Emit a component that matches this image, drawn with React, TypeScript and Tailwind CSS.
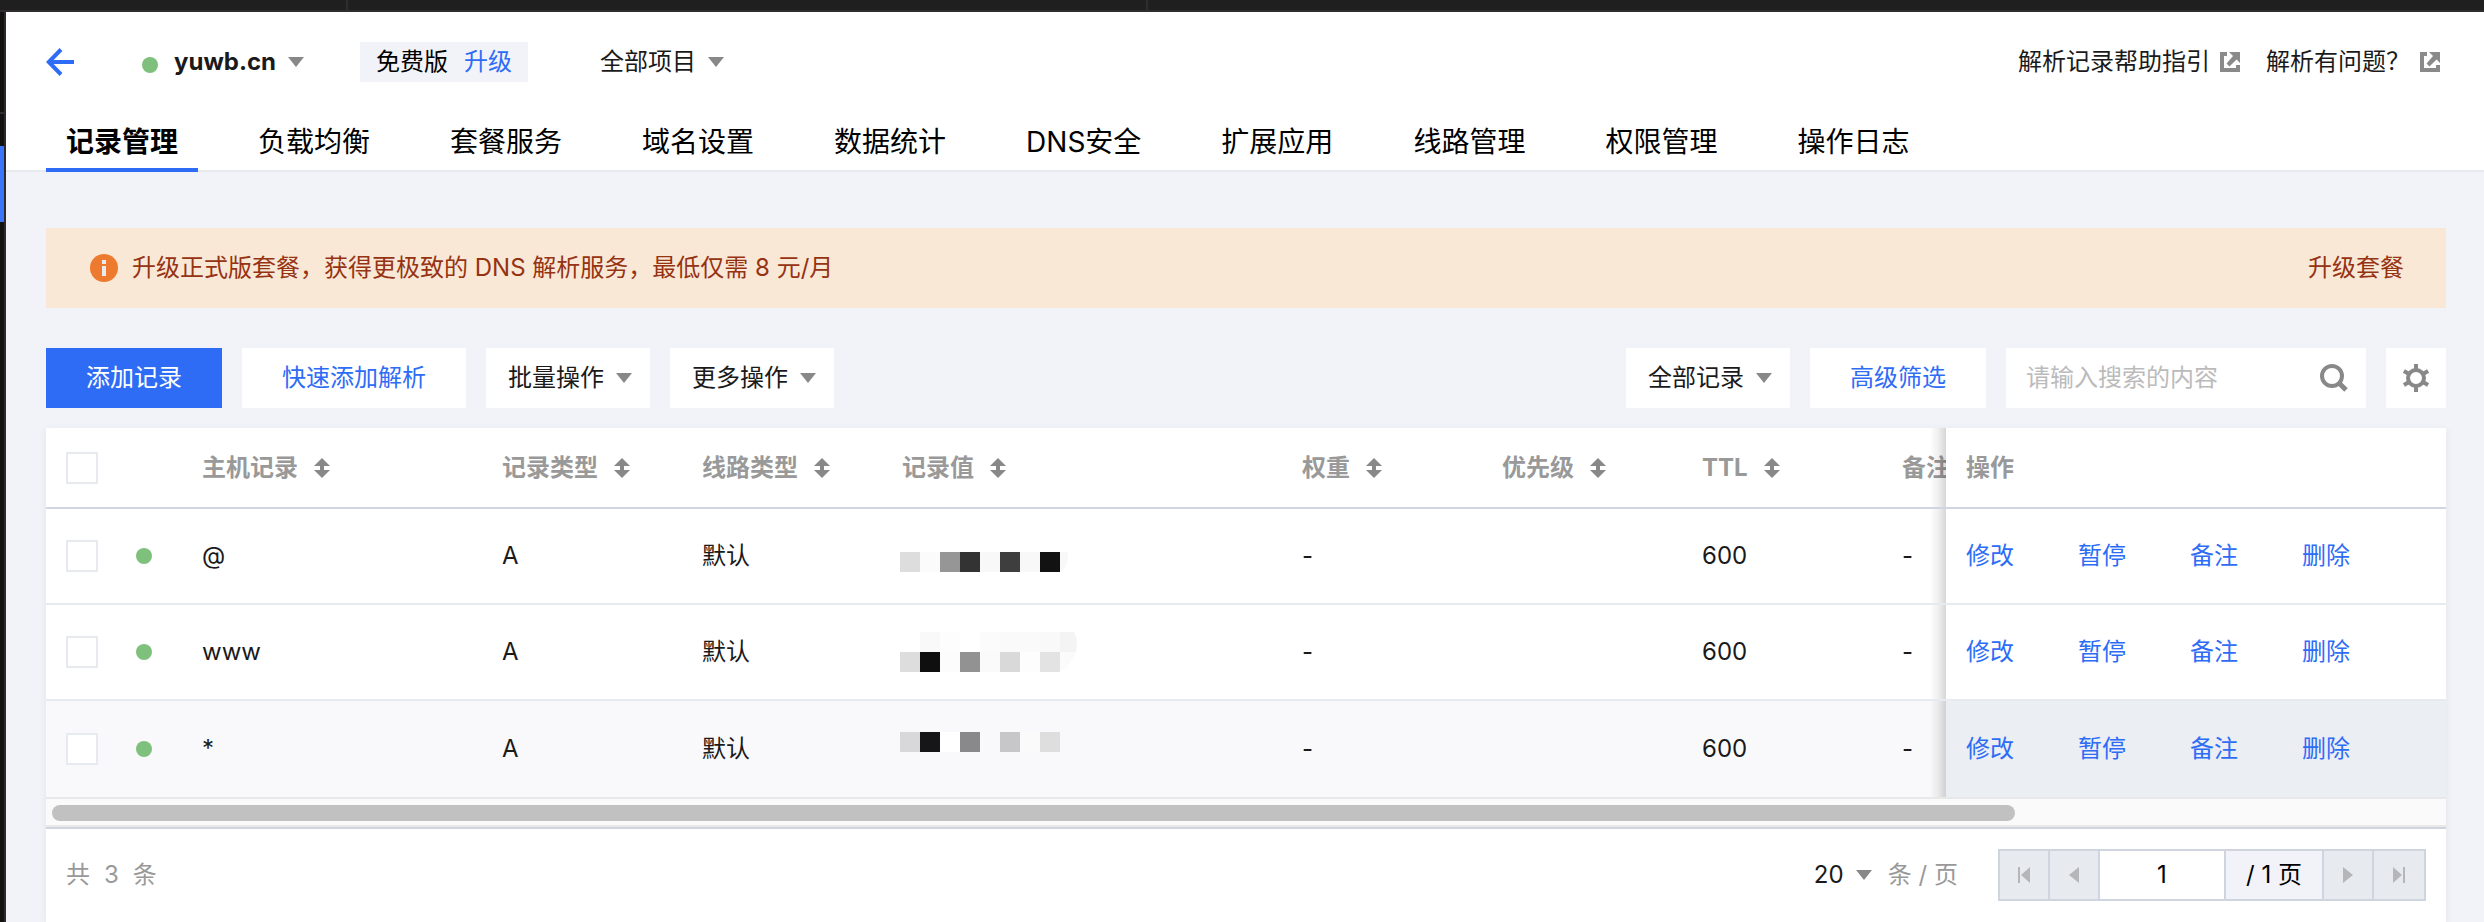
import type { ReactNode } from 'react';

const TABS = [
  '记录管理',
  '负载均衡',
  '套餐服务',
  '域名设置',
  '数据统计',
  'DNS安全',
  '扩展应用',
  '线路管理',
  '权限管理',
  '操作日志',
];

const COLUMNS = [
  { label: '主机记录', width: 'w-[300px]' },
  { label: '记录类型', width: 'w-[200px]' },
  { label: '线路类型', width: 'w-[200px]' },
  { label: '记录值', width: 'w-[400px]' },
  { label: '权重', width: 'w-[200px]' },
  { label: '优先级', width: 'w-[200px]' },
  { label: 'TTL', width: 'w-[200px]' },
];

const ACTIONS = ['修改', '暂停', '备注', '删除'];

type Tile = [x: number, y: number, fill: string];
type Tail = [path: string, fill: string];

interface DnsRecord {
  host: string;
  type: string;
  line: string;
  tiles: Tile[];
  tails: Tail[];
  weight: string;
  priority: string;
  ttl: string;
  remark: string;
  highlighted?: boolean;
}

const RECORDS: DnsRecord[] = [
  {
    host: '@',
    type: 'A',
    line: '默认',
    tiles: [
      [0, 26, '#dddddd'],
      [20, 26, '#fbfbfb'],
      [40, 26, '#969696'],
      [60, 26, '#333333'],
      [80, 26, '#f8f8f8'],
      [100, 26, '#3e3e3e'],
      [120, 26, '#f8f8f8'],
      [140, 26, '#121212'],
    ],
    tails: [['M160 26H168V34Q166 41 161 46H160Z', '#f8f8f8']],
    weight: '-',
    priority: '',
    ttl: '600',
    remark: '-',
  },
  {
    host: 'www',
    type: 'A',
    line: '默认',
    tiles: [
      [20, 10, '#f9f9f9'],
      [40, 10, '#fdfdfd'],
      [80, 10, '#fbfbfb'],
      [100, 10, '#fafafa'],
      [120, 10, '#fafafa'],
      [140, 10, '#f9f9f9'],
      [0, 30, '#dddddd'],
      [20, 30, '#0f0f0f'],
      [40, 30, '#fcfcfc'],
      [60, 30, '#929292'],
      [80, 30, '#fafafa'],
      [100, 30, '#d9d9d9'],
      [120, 30, '#fdfdfd'],
      [140, 30, '#e3e3e3'],
    ],
    tails: [
      ['M160 10H174Q177 15 177 22L176 30H160Z', '#f4f4f4'],
      ['M160 30H176Q172 43 160 49Z', '#fbfbfb'],
    ],
    weight: '-',
    priority: '',
    ttl: '600',
    remark: '-',
  },
  {
    host: '*',
    type: 'A',
    line: '默认',
    tiles: [
      [0, 13, '#d8d8da'],
      [20, 13, '#161618'],
      [40, 13, '#ffffff'],
      [60, 13, '#89898b'],
      [100, 13, '#c7c7c9'],
      [120, 13, '#fafafb'],
      [140, 13, '#dededf'],
    ],
    tails: [],
    weight: '-',
    priority: '',
    ttl: '600',
    remark: '-',
    highlighted: true,
  },
];

function Caret() {
  return (
    <svg className="pointer-events-none h-[10px] w-4 shrink-0" viewBox="0 0 16 10" fill="#888888" aria-hidden="true">
      <path d="M0 0H16L8 10Z" />
    </svg>
  );
}

function SortIcon() {
  return (
    <svg className="h-5 w-4 shrink-0" viewBox="0 0 16 20" fill="#888888" aria-hidden="true">
      <path d="M8 0L16 8H10V12H16L8 20L0 12H6V8H0Z" />
    </svg>
  );
}

function ExternalIcon() {
  return (
    <svg className="h-5 w-5 shrink-0" viewBox="0 0 20 20" fill="#8a8a8a" aria-hidden="true">
      <path d="M0 0H7V4H4V16H16V13H20V20H0Z" />
      <path d="M9 0H20V11L16.6 7.4L9.4 14.4L6.6 11.6L13 4Z" />
    </svg>
  );
}

function GearIcon() {
  return (
    <svg className="h-7 w-7" viewBox="0 0 28 28" fill="none" stroke="#888888" strokeWidth="4" aria-hidden="true">
      <circle cx="14" cy="14" r="8" />
      <path d="M14 0V5M14 23V28M1.9 7L6.2 9.5M21.8 18.5L26.1 21M1.9 21L6.2 18.5M21.8 9.5L26.1 7" />
    </svg>
  );
}

function SearchIcon() {
  return (
    <svg className="h-7 w-7" viewBox="0 0 28 28" fill="none" stroke="#888888" aria-hidden="true">
      <circle cx="12" cy="12" r="10" strokeWidth="4" />
      <path d="M19 19L26 26" strokeWidth="5" />
    </svg>
  );
}

function StatusDot() {
  return <span className="block h-4 w-4 rounded-full bg-[#7fc07d]" />;
}

interface PickerProps {
  label: string;
  options: string[];
  className?: string;
  selectClassName?: string;
}

function Picker({ label, options, className = '', selectClassName = '' }: PickerProps) {
  return (
    <div className={`inline-flex items-center ${className}`}>
      <select
        aria-label={label}
        className={`cursor-pointer appearance-none bg-transparent outline-none ${selectClassName}`}
      >
        {options.map((option) => (
          <option key={option}>{option}</option>
        ))}
      </select>
      <Caret />
    </div>
  );
}

function MenuButton({ children }: { children: ReactNode }) {
  return (
    <button type="button" aria-haspopup="menu" className="flex h-[60px] items-center gap-3 bg-white pr-[18px] pl-[22px]">
      {children}
      <Caret />
    </button>
  );
}

function Checkbox({ label }: { label: string }) {
  return (
    <input
      type="checkbox"
      aria-label={label}
      className="block h-8 w-8 appearance-none border-2 border-[#e7eaef] bg-white checked:bg-[#2e6cf6]"
    />
  );
}

function BrowserEdge() {
  return (
    <div className="flex h-3 border-b-2 border-[#302d30] bg-[#1f1f1f]" aria-hidden="true">
      <div className="w-[348px] border-r-2 border-[#302d30]" />
      <div className="w-[800px] border-r-2 border-[#302d30]" />
    </div>
  );
}

function SideEdge() {
  return (
    <div className="flex w-[6px] shrink-0 flex-col border-r-2 border-[#2c2a2c] bg-[#14120f]" aria-hidden="true">
      <div className="h-[102px] border-b-2 border-[#302d30]" />
      <div className="mt-8 h-[76px] bg-[#3b74f7]" />
    </div>
  );
}

function Header() {
  return (
    <header className="bg-white px-[40px] shadow-[inset_0_-2px_0_#e7eaef]">
      <div className="flex h-[100px] items-center justify-between">
        <div className="flex items-center">
          <button type="button" aria-label="返回" className="mr-[68px]">
            <svg className="h-7 w-7" viewBox="0 0 28 28" fill="none" stroke="#2e6cf6" strokeWidth="4" aria-hidden="true">
              <path d="M15 1.5L2.8 14L15 26.5M3 14H28" />
            </svg>
          </button>
          <div className="flex items-center gap-4">
            <div className="pt-1.5">
              <StatusDot />
            </div>
            <Picker label="域名" options={['yuwb.cn']} className="gap-3" selectClassName="font-bold" />
          </div>
          <div className="ml-14 flex h-10 items-center gap-4 bg-[#f2f3f8] px-4 text-black">
            <span>免费版</span>
            <a href="#upgrade" className="text-[#2e6cf6]">
              升级
            </a>
          </div>
          <Picker label="项目" options={['全部项目']} className="ml-[72px] gap-3" />
        </div>
        <div className="flex items-center gap-[26px]">
          <a href="#guide" className="flex items-center gap-[10px]">
            解析记录帮助指引
            <ExternalIcon />
          </a>
          <a href="#help" className="flex items-center gap-[10px] pr-1">
            解析有问题？
            <ExternalIcon />
          </a>
        </div>
      </div>
      <nav className="flex gap-10 text-[28px] text-black">
        {TABS.map((tab, index) => (
          <a
            key={tab}
            href={`#tab-${index}`}
            aria-current={index === 0 ? 'page' : undefined}
            className={`flex h-[60px] items-center border-y-4 border-t-transparent px-5 whitespace-nowrap ${
              index === 0 ? 'border-b-[#2e6cf6] font-bold' : 'border-b-transparent'
            }`}
          >
            {tab}
          </a>
        ))}
      </nav>
    </header>
  );
}

function UpgradeNotice() {
  return (
    <div className="flex h-20 items-center justify-between bg-[#fae8d6] pr-[42px] pl-11 text-[#953313]">
      <p className="flex items-center gap-[14px]">
        <svg className="h-7 w-7 shrink-0" viewBox="0 0 28 28" aria-hidden="true">
          <circle cx="14" cy="14" r="14" fill="#ee7a30" />
          <path d="M12 6H16V10H12ZM12 12H16V22H12Z" fill="#e7eaef" />
        </svg>
        升级正式版套餐，获得更极致的 DNS 解析服务，最低仅需 8 元/月
      </p>
      <a href="#plans">升级套餐</a>
    </div>
  );
}

function Toolbar() {
  return (
    <div className="mt-10 flex h-[60px] items-center justify-between">
      <div className="flex gap-5">
        <button type="button" className="h-[60px] bg-[#2e6cf6] px-10 text-white">
          添加记录
        </button>
        <button type="button" className="h-[60px] bg-white px-10 text-[#2e6cf6]">
          快速添加解析
        </button>
        <MenuButton>批量操作</MenuButton>
        <MenuButton>更多操作</MenuButton>
      </div>
      <div className="flex gap-5">
        <Picker label="记录筛选" options={['全部记录']} className="h-[60px] gap-3 bg-white pr-[18px] pl-[22px]" />
        <button type="button" className="h-[60px] bg-white px-10 text-[#2e6cf6]">
          高级筛选
        </button>
        <div className="flex h-[60px] w-[360px] items-center bg-white pr-[18px] pl-5">
          <input
            type="text"
            aria-label="搜索"
            placeholder="请输入搜索的内容"
            className="min-w-0 flex-1 bg-transparent outline-none placeholder:text-[#bbbbbb]"
          />
          <button type="button" aria-label="搜索">
            <SearchIcon />
          </button>
        </div>
        <button type="button" aria-label="设置" className="flex h-[60px] w-[60px] items-center justify-center bg-white">
          <GearIcon />
        </button>
      </div>
    </div>
  );
}

const FIXED_EDGE =
  "sticky right-0 before:absolute before:inset-y-0 before:-left-4 before:w-4 before:bg-linear-to-l before:from-black/16 before:via-black/6 before:to-transparent before:content-['']";

function RecordTable() {
  return (
    <div className="[scrollbar-width:none] overflow-x-auto">
      <table className="w-[2920px] table-fixed border-separate border-spacing-0 text-left">
        <thead className="text-[#999999]">
          <tr className="h-[81px] [&>th]:border-b-2 [&>th]:border-[#cfd5e2] [&>th]:font-bold">
            <th className="w-[70px] pl-5">
              <Checkbox label="全选" />
            </th>
            <th className="w-[66px]" />
            {COLUMNS.map(({ label, width }) => (
              <th key={label} className={`pl-5 ${width}`}>
                <button type="button" className="flex items-center gap-4">
                  {label}
                  <SortIcon />
                </button>
              </th>
            ))}
            <th className="pl-5">备注</th>
            <th className={`w-[500px] bg-white pl-5 ${FIXED_EDGE}`}>操作</th>
          </tr>
        </thead>
        <tbody>
          {RECORDS.map((record) => (
            <tr
              key={record.host}
              className={`h-24 [&>td]:border-b-2 [&>td]:border-[#e7eaef] last:[&>td]:border-b-0 [&>td]:pl-5 ${
                record.highlighted ? 'bg-[#f9f9fc]' : 'bg-white'
              }`}
            >
              <td>
                <Checkbox label={`选择 ${record.host}`} />
              </td>
              <td>
                <StatusDot />
              </td>
              <td>{record.host}</td>
              <td>{record.type}</td>
              <td>{record.line}</td>
              <td>
                <svg className="block h-[60px] w-[176px] overflow-visible" viewBox="2 0 176 60" aria-hidden="true">
                  {record.tiles.map(([x, y, fill]) => (
                    <rect key={`${x}-${y}`} x={x} y={y} width="20" height="20" fill={fill} />
                  ))}
                  {record.tails.map(([path, fill]) => (
                    <path key={path} d={path} fill={fill} />
                  ))}
                </svg>
              </td>
              <td>{record.weight}</td>
              <td>{record.priority}</td>
              <td>{record.ttl}</td>
              <td>{record.remark}</td>
              <td className={`${FIXED_EDGE} ${record.highlighted ? 'bg-[#ebeef3]' : 'bg-white'}`}>
                <div className="flex gap-16 text-[#2e6cf6]">
                  {ACTIONS.map((action) => (
                    <button key={action} type="button">
                      {action}
                    </button>
                  ))}
                </div>
              </td>
            </tr>
          ))}
        </tbody>
      </table>
    </div>
  );
}

function ScrollTrack() {
  return (
    <div className="border-y-2 border-[#e8e8e8] bg-[#fafafa] px-[6px] pt-[6px] pb-1" aria-hidden="true">
      <div className="h-4 w-[82.2%] rounded-full bg-[#c1c1c1]" />
    </div>
  );
}

function PagerButton({ label, path }: { label: string; path: string }) {
  return (
    <button type="button" aria-label={label} disabled className="flex w-[50px] items-center justify-center bg-[#e7eaef]">
      <svg className="h-4 w-3" viewBox="0 0 12 16" fill="#b4b6ba" aria-hidden="true">
        <path d={path} />
      </svg>
    </button>
  );
}

function Pagination() {
  return (
    <footer className="flex items-center justify-between border-t-2 border-[#cfd5de] px-5 py-5">
      <p className="flex gap-[14px] text-[#999999]">
        <span>共</span>
        <span>3</span>
        <span>条</span>
      </p>
      <div className="flex items-center">
        <Picker label="每页条数" options={['20']} className="gap-3" />
        <span className="mr-10 ml-4 text-[#999999]">条 / 页</span>
        <div className="flex h-[52px] divide-x-2 divide-[#cfd5de] border-2 border-[#cfd5de]">
          <PagerButton label="第一页" path="M0 0H2V16H0ZM12 0V16L3 8Z" />
          <PagerButton label="上一页" path="M11 0V16L1 8Z" />
          <input type="text" aria-label="页码" defaultValue="1" className="w-[126px] bg-white text-center text-black outline-none" />
          <span className="flex w-[98px] items-center justify-center bg-[#f2f3f8] text-black">/ 1 页</span>
          <PagerButton label="下一页" path="M1 0V16L11 8Z" />
          <PagerButton label="最后一页" path="M10 0H12V16H10ZM0 0V16L9 8Z" />
        </div>
      </div>
    </footer>
  );
}

export default function App() {
  return (
    <div className="flex min-h-screen flex-col bg-[#f2f3f8] font-['Inter','Noto_Sans_CJK_SC',sans-serif] text-[24px] leading-9 text-[#1a1a1a]">
      <BrowserEdge />
      <div className="flex flex-1">
        <SideEdge />
        <div className="flex min-w-0 flex-1 flex-col">
          <Header />
          <main className="flex flex-1 flex-col pt-14 pr-[38px] pl-10">
            <UpgradeNotice />
            <Toolbar />
            <section className="mt-5 flex-1 bg-white shadow-[0_2px_8px_rgba(54,58,80,0.08)]">
              <RecordTable />
              <ScrollTrack />
              <Pagination />
            </section>
          </main>
        </div>
      </div>
    </div>
  );
}
